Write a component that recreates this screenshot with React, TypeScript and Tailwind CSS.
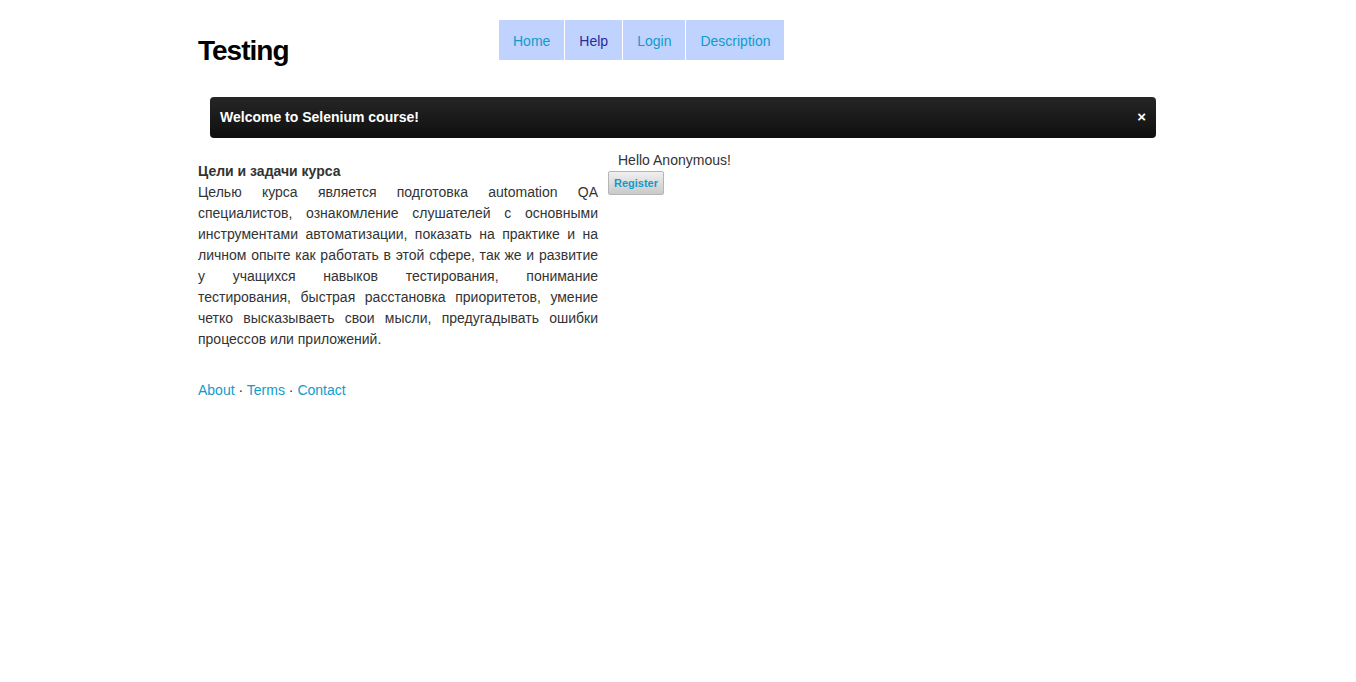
import React from "react";

export default function App() {
  const font = { fontFamily: '"Liberation Sans", Arial, sans-serif' };
  return (
    <div className="min-h-screen bg-white text-[#333] text-[14px]" style={font}>
      <div className="mx-auto w-[960px]">
        <header className="flex items-start pt-[20px]">
          <h1 className="w-[301px] pt-[17px] text-[28px] font-bold leading-[28px] tracking-[-1px] text-black">
            Testing
          </h1>
          <nav className="flex gap-[1px] bg-white">
            <a className="flex h-[40px] items-center bg-[#bfd3fe] px-[14px] pt-[2px] text-[#0f9bcd]">Home</a>
            <a className="flex h-[40px] items-center bg-[#bfd3fe] px-[14px] pt-[2px] text-[#2a2a9c]">Help</a>
            <a className="flex h-[40px] items-center bg-[#bfd3fe] px-[14px] pt-[2px] text-[#0f9bcd]">Login</a>
            <a className="flex h-[40px] items-center bg-[#bfd3fe] px-[14px] pt-[2px] text-[#0f9bcd]">Description</a>
          </nav>
        </header>
        <div className="ml-[12px] mr-[2px] mt-[32px] flex h-[41px] items-center justify-between rounded-[4px] bg-gradient-to-b from-[#262626] to-[#0f0f0f] pl-[10px] pr-[10px] text-white">
          <span className="font-bold">Welcome to Selenium course!</span>
          <span className="text-[15px] font-bold">×</span>
        </div>
        <div className="flex gap-[10px] pt-[12px]">
          <div className="w-[400px] pt-[11px] leading-[21px]">
            <div className="font-bold">Цели и задачи курса</div>
            <p className="text-justify">
              Целью курса является подготовка automation QA специалистов, ознакомление слушателей с основными инструментами автоматизации, показать на практике и на личном опыте как работать в этой сфере, так же и развитие у учащихся навыков тестирования, понимание тестирования, быстрая расстановка приоритетов, умение четко высказываеть свои мысли, предугадывать ошибки процессов или приложений.
            </p>
          </div>
          <div className="flex flex-col items-start">
            <div className="pl-[10px] leading-[20px]">Hello Anonymous!</div>
            <button className="mt-[1px] h-[24px] rounded-[2px] border border-[#b5b5b5] bg-gradient-to-b from-[#f0f0f0] to-[#c9c9c9] px-[5px] text-[11px] font-bold text-[#0f9bcd]">
              Register
            </button>
          </div>
        </div>
        <footer className="mt-[30px] leading-[20px]">
          <a className="text-[#0f9bcd]">About</a>
          <span> · </span>
          <a className="text-[#0f9bcd]">Terms</a>
          <span> · </span>
          <a className="text-[#0f9bcd]">Contact</a>
        </footer>
      </div>
    </div>
  );
}
